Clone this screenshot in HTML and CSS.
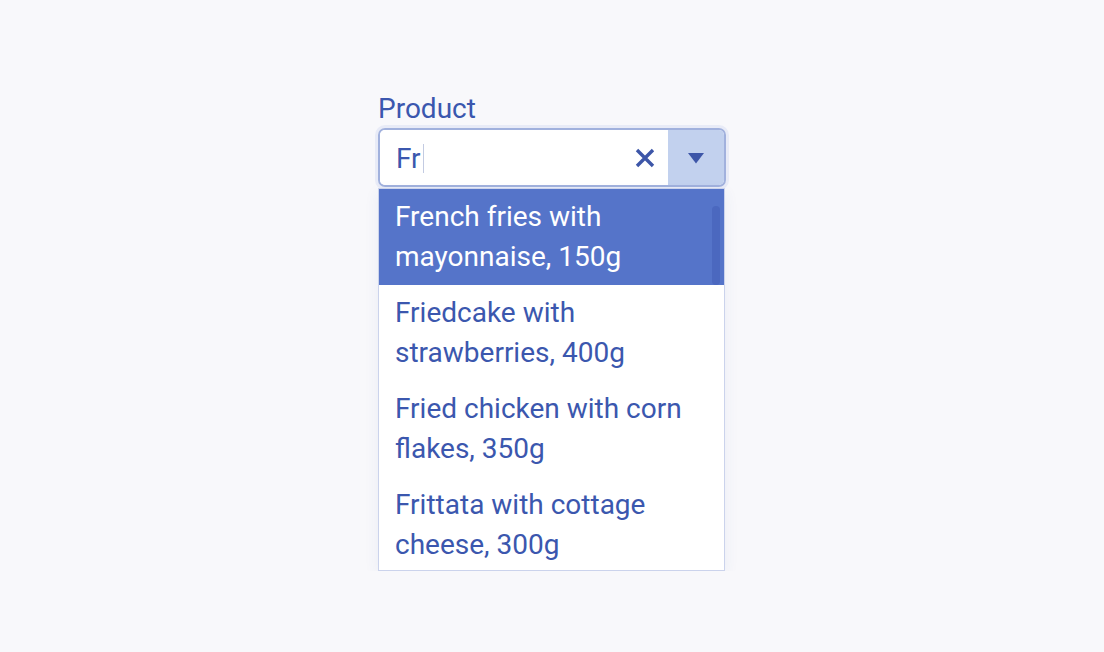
FILE: index.html
```html
<!DOCTYPE html>
<html lang="en">
<head>
<meta charset="utf-8">
<title>Product</title>
<link rel="stylesheet" href="styles.css">
</head>
<body>
<div class="wrap">
  <div class="field">
    <div class="label">Product</div>
    <div class="control">
      <div class="input">
        <span class="value">Fr</span><span class="caret"></span>
        <span class="spacer"></span>
        <svg class="clear" width="22" height="22" viewBox="0 0 22 22"><path d="M3 3 L19 19 M19 3 L3 19" stroke="#3d56a8" stroke-width="3.4" fill="none"/></svg>
      </div>
      <div class="toggle">
        <svg width="16" height="11" viewBox="0 0 16 11"><path d="M0 0 H16 L8 10.5 Z" fill="#3d56a8"/></svg>
      </div>
    </div>
    <div class="list">
      <div class="item active">French fries with mayonnaise, 150g</div>
      <div class="item">Friedcake with strawberries, 400g</div>
      <div class="item">Fried chicken with corn flakes, 350g</div>
      <div class="item">Frittata with cottage cheese, 300g</div>
      <div class="thumb"></div>
    </div>
  </div>
</div>
</body>
</html>
```
FILE: styles.css
```css
html, body {
  margin: 0;
  padding: 0;
  background: #f8f8fb;
  font-family: Roboto, "Liberation Sans", sans-serif;
}
.wrap {
  display: flex;
  justify-content: center;
  padding-top: 93px;
}
.field {
  width: 348px;
}
.label {
  font-size: 28px;
  line-height: 32px;
  color: #3b57ae;
  margin-bottom: 3px;
}
.control {
  box-sizing: border-box;
  height: 59px;
  border: 2px solid #a1b1dd;
  border-radius: 7px;
  box-shadow: 0 0 0 3px #e8ebf7;
  display: flex;
  overflow: hidden;
}
.input {
  flex: 1;
  background: #fff;
  display: flex;
  align-items: center;
  padding-left: 16px;
  padding-right: 12px;
  padding-top: 2px;
  font-size: 28px;
  color: #3b57ae;
}
.caret {
  width: 1px;
  height: 29px;
  background: #c3cbe2;
  margin-left: 2px;
}
.spacer {
  flex: 1;
}
.clear {
  display: block;
  margin-top: -2px;
}
.toggle {
  width: 56px;
  background: #c2d1ee;
  display: flex;
  align-items: center;
  justify-content: center;
}
.toggle svg {
  display: block;
  margin-top: 1px;
}
.list {
  position: relative;
  margin-top: 1px;
  box-sizing: border-box;
  height: 383px;
  width: 347px;
  border: 1px solid #cbd3ec;
  background: #fff;
  overflow: hidden;
  box-shadow: 0 4px 14px rgba(60, 80, 160, 0.07);
}
.item {
  padding: 8px 40px 8px 16px;
  line-height: 40px;
  font-size: 28px;
  color: #3b57ae;
}
.item.active {
  background: #5574c9;
  color: #fff;
}
.thumb {
  position: absolute;
  right: 4px;
  top: 17px;
  width: 8px;
  height: 79px;
  border-radius: 4px;
  background: #4b68bf;
}
```
